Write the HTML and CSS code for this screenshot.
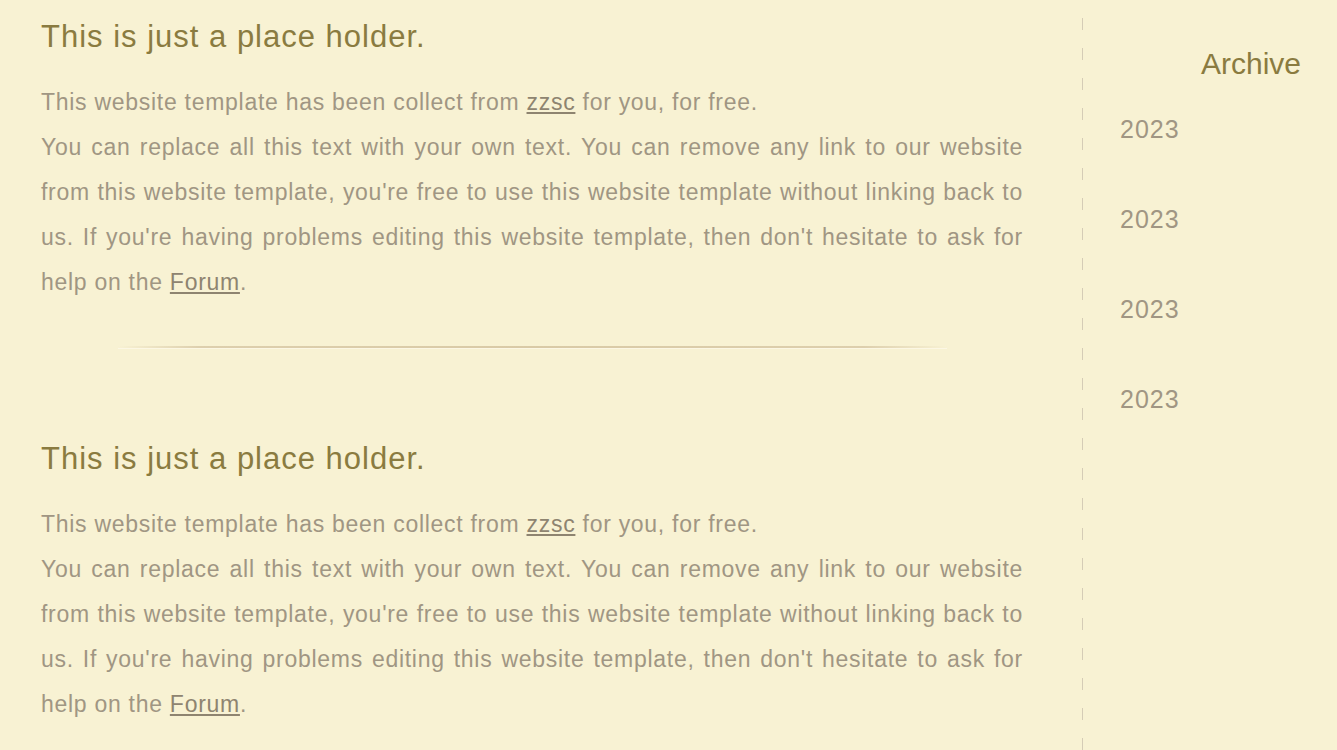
FILE: index.html
```html
<!DOCTYPE html>
<html lang="en">
<head>
    <meta charset="UTF-8">
    <meta name="viewport" content="width=device-width, initial-scale=1.0">
    <title>Blog</title>
    <link rel="stylesheet" href="styles.css">
</head>
<body>
    <div class="page">
        <div class="main">
            <div class="post">
                <h2>This is just a place holder.</h2>
                <p>This website template has been collect from <a href="#">zzsc</a> for you, for free.<br>
                You can replace all this text with your own text. You can remove any link to our website from this website template, you're free to use this website template without linking back to us. If you're having problems editing this website template, then don't hesitate to ask for help on the <a href="#">Forum</a>.</p>
            </div>
            <div class="divider"></div>
            <div class="post">
                <h2>This is just a place holder.</h2>
                <p>This website template has been collect from <a href="#">zzsc</a> for you, for free.<br>
                You can replace all this text with your own text. You can remove any link to our website from this website template, you're free to use this website template without linking back to us. If you're having problems editing this website template, then don't hesitate to ask for help on the <a href="#">Forum</a>.</p>
            </div>
        </div>
        <div class="sidebar">
            <h3>Archive</h3>
            <ul>
                <li><a href="#">2023</a></li>
                <li><a href="#">2023</a></li>
                <li><a href="#">2023</a></li>
                <li><a href="#">2023</a></li>
            </ul>
        </div>
    </div>
</body>
</html>
```
FILE: styles.css
```css
body {
    margin: 0;
    background-color: #f8f2d3;
    font-family: "Liberation Sans", Arial, sans-serif;
}
.page {
    display: flex;
    min-height: 750px;
}
.main {
    width: 982px;
    padding: 17px 59px 0 41px;
}
.post h2 {
    margin: 0;
    font-size: 31px;
    font-weight: normal;
    line-height: 40px;
    letter-spacing: 1px;
    color: #8a7b40;
}
.post p {
    margin: 23px 0 0;
    font-size: 23px;
    line-height: 45px;
    letter-spacing: 0.72px;
    text-align: justify;
    color: #a09683;
}
.post p a {
    color: #8e8470;
    text-decoration: underline;
}
.divider {
    width: 829px;
    height: 2px;
    margin: 41px auto 90px;
    background: linear-gradient(to right, rgba(222, 208, 176, 0), #ddcfad 10%, #d9caa6 50%, #ddcfad 90%, rgba(222, 208, 176, 0));
    border-bottom: 1px solid #fcf7e4;
}
.sidebar {
    flex: 1;
    padding: 0 36px 0 38px;
    background: linear-gradient(to bottom, #d5ccb6 12px, transparent 12px) 0 18px / 1px 30px repeat-y;
}
.sidebar h3 {
    margin: 44px 0 0;
    font-size: 30px;
    font-weight: normal;
    line-height: 40px;
    text-align: right;
    color: #8a7b40;
}
.sidebar ul {
    list-style: none;
    margin: 0;
    padding: 0;
}
.sidebar li {
    font-size: 25px;
    line-height: 90px;
}
.sidebar li a {
    letter-spacing: 1px;
    color: #a09683;
    text-decoration: none;
}
```
